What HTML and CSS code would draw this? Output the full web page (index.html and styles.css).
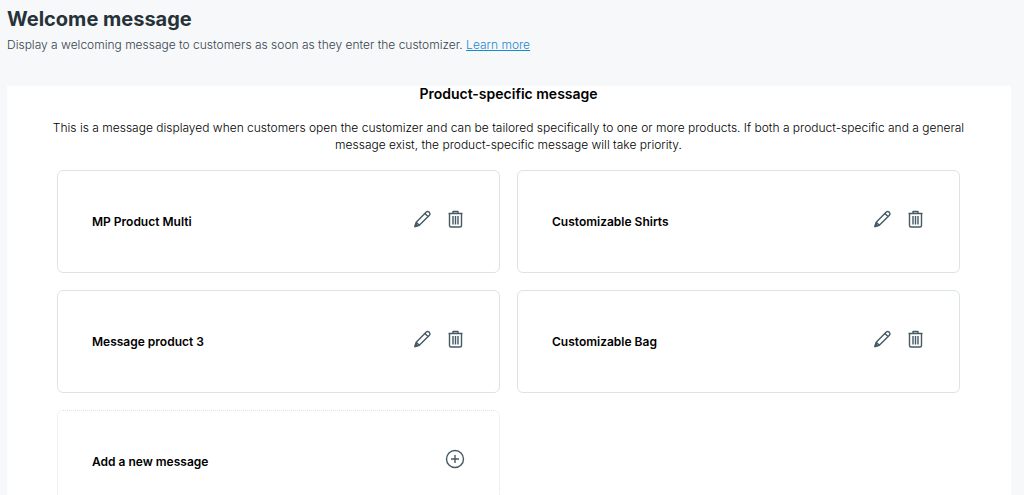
FILE: index.html
```
<!DOCTYPE html>
<html lang="en">
<head>
<meta charset="utf-8">
<meta name="viewport" content="width=device-width, initial-scale=1">
<title>Welcome message</title>
<link rel="stylesheet" href="styles.css">
</head>
<body>
<svg class="symbols" aria-hidden="true">
  <symbol id="pencil" viewBox="0 0 20 20">
    <path d="M3 17.500l1.200-4.300L14.300 3.100a2 2 0 0 1 2.800 0l.3.300a2 2 0 0 1 0 2.800L7.300 16.300zM12.900 4.500l3.100 3.100M4.200 13.200l3.100 3.100"/>
    <path class="solid" d="M3 17.500l.8-2.700 1.900 1.900z"/>
  </symbol>
  <symbol id="trash" viewBox="0 0 20 20">
    <path d="M3.500 4.500h14M8 4.500v-2h5v2M4.500 4.500v12a1.500 1.500 0 0 0 1.500 1.500h9a1.500 1.500 0 0 0 1.500-1.500v-12M8 7v8.500M10.500 7v8.500M13 7v8.500"/>
  </symbol>
  <symbol id="plus" viewBox="0 0 20 20">
    <circle cx="10" cy="10" r="8.500"/>
    <path d="M10 6v8M6 10h8"/>
  </symbol>
</svg>
<header class="page-header">
  <h1 class="page-title">Welcome message</h1>
  <p class="page-intro">Display a welcoming message to customers as soon as they enter the customizer. <a class="link" href="#">Learn more</a></p>
</header>
<main class="panel">
  <h2 class="panel-title">Product-specific message</h2>
  <p class="panel-text">This is a message displayed when customers open the customizer and can be tailored specifically to one or more products. If both a product-specific and a general message exist, the product-specific message will take priority.</p>
  <div class="cards">
    <article class="card">
      <h3 class="card-title">MP Product Multi</h3>
      <button class="icon-button" type="button" aria-label="Edit MP Product Multi"><svg class="icon"><use href="#pencil"/></svg></button>
      <button class="icon-button" type="button" aria-label="Delete MP Product Multi"><svg class="icon"><use href="#trash"/></svg></button>
    </article>
    <article class="card">
      <h3 class="card-title">Customizable Shirts</h3>
      <button class="icon-button" type="button" aria-label="Edit Customizable Shirts"><svg class="icon"><use href="#pencil"/></svg></button>
      <button class="icon-button" type="button" aria-label="Delete Customizable Shirts"><svg class="icon"><use href="#trash"/></svg></button>
    </article>
    <article class="card">
      <h3 class="card-title">Message product 3</h3>
      <button class="icon-button" type="button" aria-label="Edit Message product 3"><svg class="icon"><use href="#pencil"/></svg></button>
      <button class="icon-button" type="button" aria-label="Delete Message product 3"><svg class="icon"><use href="#trash"/></svg></button>
    </article>
    <article class="card">
      <h3 class="card-title">Customizable Bag</h3>
      <button class="icon-button" type="button" aria-label="Edit Customizable Bag"><svg class="icon"><use href="#pencil"/></svg></button>
      <button class="icon-button" type="button" aria-label="Delete Customizable Bag"><svg class="icon"><use href="#trash"/></svg></button>
    </article>
    <article class="card card-new">
      <h3 class="card-title">Add a new message</h3>
      <button class="icon-button" type="button" aria-label="Add a new message"><svg class="icon"><use href="#plus"/></svg></button>
    </article>
  </div>
</main>
</body>
</html>
```
FILE: styles.css
```
* {
  box-sizing: border-box;
}

body {
  margin: 0;
  padding: 7px 13px 0 7px;
  background: #f6f8fa;
  color: #000;
  font-family: Inter, "Liberation Sans", sans-serif;
  font-size: 12px;
  line-height: 17px;
}

h1, h2, h3, p {
  margin: 0;
}

.symbols {
  display: none;
}

.page-header {
  padding-bottom: 33px;
}

.page-title {
  color: #263238;
  font-size: 20px;
  font-weight: 700;
  line-height: 24px;
}

.page-intro {
  padding-top: 5px;
  color: #37444c;
  font-weight: 300;
}

.link {
  color: #1a8ad0;
}

.panel {
  padding: 0 51px 32px 50px;
  background: #fff;
}

.panel-title {
  font-size: 14px;
  font-weight: 600;
  line-height: 16px;
  text-align: center;
}

.panel-text {
  padding: 17px 0;
  margin: 0 -8px;
  color: #000;
  font-weight: 300;
  text-align: center;
}

.cards {
  display: grid;
  grid-template-columns: 1fr 1fr;
  gap: 17px;
}

.card {
  display: flex;
  align-items: flex-start;
  gap: 13px;
  padding: 38px 34px 41px;
  border: 1px solid #dce3e7;
  border-radius: 6px;
}

.card-new {
  border: 1px dotted #dce3e7;
}

.card-title {
  flex: 1;
  padding-top: 4px;
  font-size: 12px;
  font-weight: 600;
  line-height: 18px;
}

.icon-button {
  display: flex;
  padding: 0;
  border: 0;
  background: none;
  color: #455a64;
  cursor: pointer;
}

.icon {
  width: 20px;
  height: 20px;
  fill: none;
  stroke: currentColor;
  stroke-width: 1.4;
  stroke-linejoin: round;
}

.solid {
  fill: currentColor;
}
```
